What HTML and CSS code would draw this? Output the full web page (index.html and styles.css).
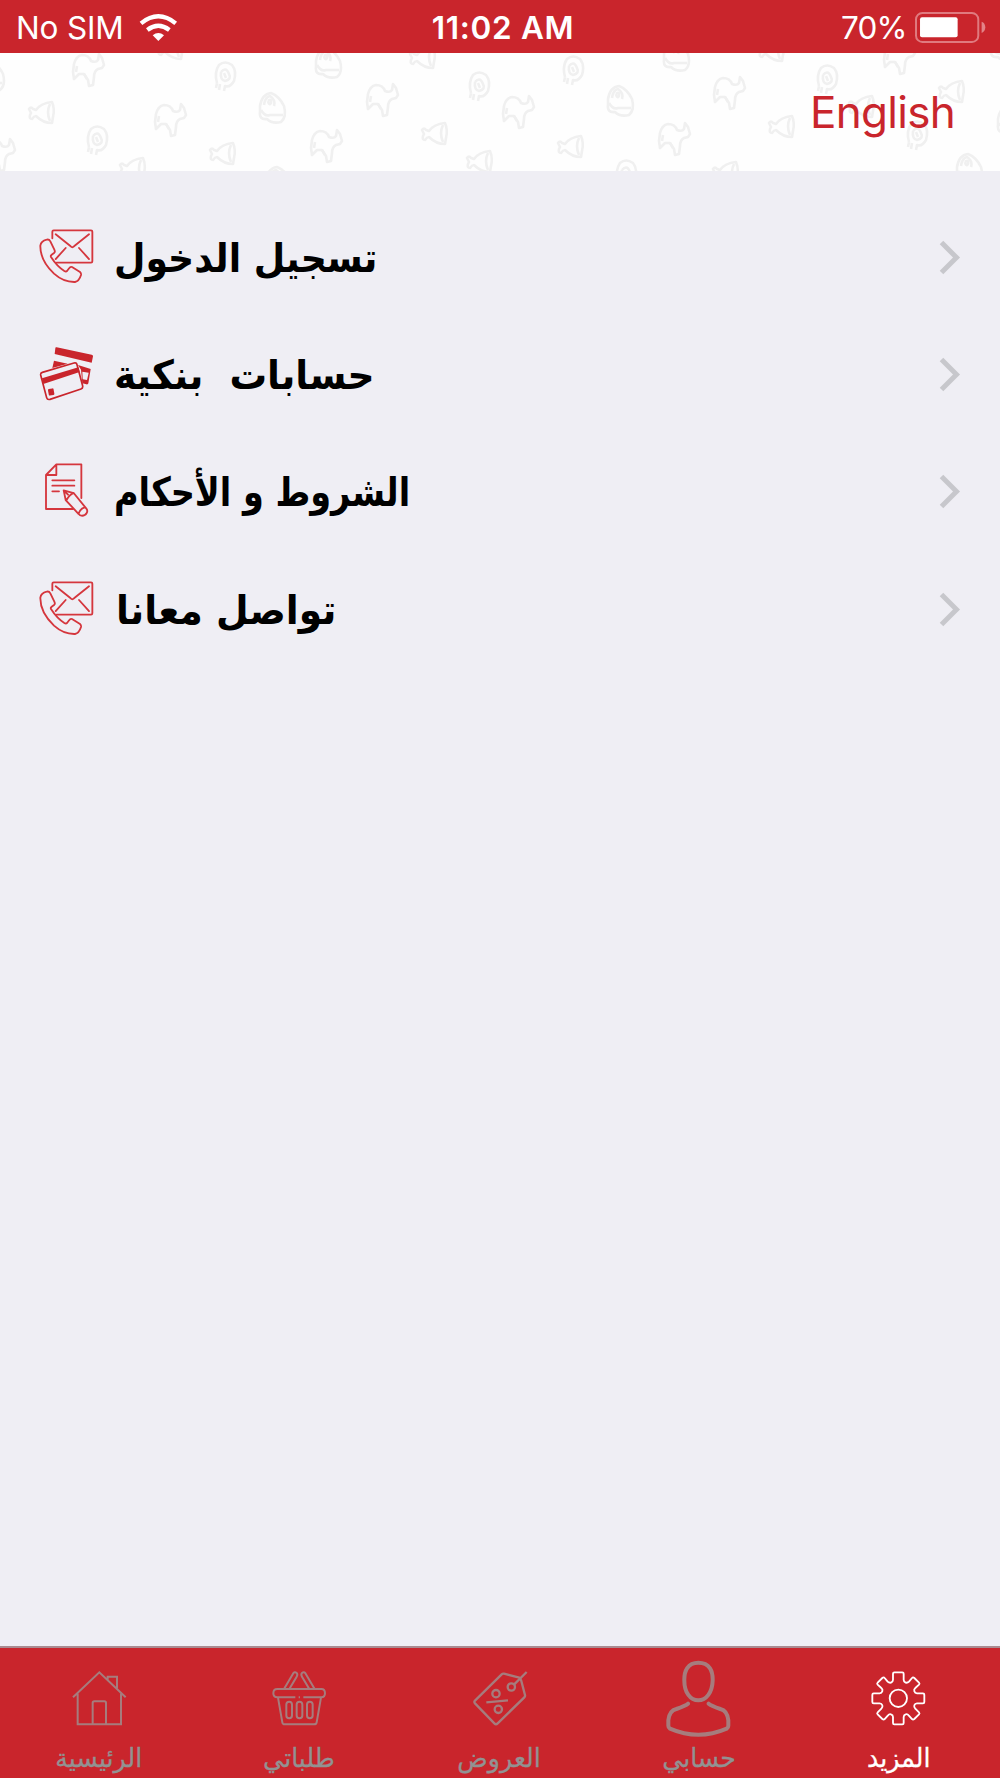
FILE: index.html
```html
<!DOCTYPE html>
<html lang="ar">
<head>
<meta charset="utf-8">
<title>المزيد</title>
<link rel="stylesheet" href="styles.css">
</head>
<body>
<div class="app">
  <div class="status">
    <div class="carrier"><span class="sim">No SIM</span>
      <svg class="wifi" viewBox="418 36 116 86"><g fill="none" stroke="#fff"><path d="M424 67Q476 25 528 67" stroke-width="13"/><path d="M443 87Q476 62 509 87" stroke-width="13"/></g><path fill="#fff" d="M459 103Q476 89 493 103L476 120Z"/></svg>
    </div>
    <span class="time">11:02 AM</span>
    <div class="power"><span class="pct">70%</span>
      <svg class="battery" viewBox="1244 36 214 94"><rect x="1247" y="39" width="187" height="87" rx="19" fill="none" stroke="#e07a7f" stroke-width="6"/><rect x="1259" y="52" width="113" height="60" rx="6" fill="#fff"/><path fill="#e38388" d="M1444 65q11 4 11 17t-11 17z"/></svg>
    </div>
  </div>

  <header class="header">
    <svg class="pattern" viewBox="0 53 1000 118" aria-hidden="true">
      <defs>
        <g id="goat"><path d="M2 12Q4 4 10 3Q17 3 19 9Q24 11 26 8L27 2L30 6L32 13L30 16L26 17Q22 19 22 25L21 33L17 34L16 28L12 22L7 22L4 25L2 27L1 20Z"/><path d="M5 14L4 20M12 22L15 27"/></g>
        <g id="leg"><path d="M8 9Q13 2 24 1Q27 8 25 16L24 22Q15 22 8 15Q6 15 4 18Q1 18 2 14L3 12L1 8Q3 5 5 8Z"/><path d="M22 3Q18 11 22 20"/></g>
        <g id="ham"><path d="M2 22Q-1 11 4 4Q10-1 17 4Q22 10 19 20Q15 27 10 25L9 30M2 22L1 27M5 23L4 29"/><path d="M6 11Q11 5 14 13Q17 18 10 20Q5 19 6 11M9 12L11 17"/></g>
        <g id="steak"><path d="M1 14Q3 2 12 1Q20 4 25 14Q28 25 22 30Q13 32 8 27Q0 28 1 20Z"/><path d="M2 18Q6 25 11 23L24 23M5 13Q6 5 11 4Q17 8 15 14M9 9Q13 6 12 11Q10 14 9 9"/></g>
      </defs>
      <g class="marks">
        <use href="#goat" x="72" y="52"/><use href="#goat" x="154" y="102"/><use href="#goat" x="366" y="82"/><use href="#goat" x="310" y="128"/><use href="#goat" x="-17" y="137"/><use href="#goat" x="502" y="94"/><use href="#goat" x="713" y="75"/><use href="#goat" x="658" y="121"/><use href="#goat" x="883" y="40"/>
        <use href="#leg" x="28" y="101"/><use href="#leg" x="119" y="157"/><use href="#leg" x="209" y="142"/><use href="#leg" x="409" y="46"/><use href="#leg" x="421" y="122"/><use href="#leg" x="466" y="150"/><use href="#leg" x="157" y="37"/><use href="#leg" x="557" y="135"/><use href="#leg" x="712" y="161"/><use href="#leg" x="768" y="115"/><use href="#leg" x="848" y="95"/><use href="#leg" x="938" y="80"/><use href="#leg" x="758" y="39"/>
        <use href="#ham" x="215" y="61"/><use href="#ham" x="87" y="125"/><use href="#ham" x="469" y="71"/><use href="#ham" x="563" y="55"/><use href="#ham" x="817" y="64"/><use href="#ham" x="907" y="120"/><use href="#ham" x="616" y="159"/>
        <use href="#steak" x="259" y="92"/><use href="#steak" x="315" y="47"/><use href="#steak" x="607" y="85"/><use href="#steak" x="663" y="40"/><use href="#steak" x="956" y="153"/><use href="#steak" x="-22" y="60"/><use href="#steak" x="990" y="30"/><use href="#steak" x="997" y="105"/><use href="#steak" x="265" y="166"/>
      </g>
    </svg>
    <span class="lang">English</span>
  </header>

  <main class="list">
    <div class="row">
      <svg class="icon" viewBox="58 56 164 164"><g id="contact" class="line"><path d="M98 84V64Q98 60 102 60H214Q218 60 218 64V153Q218 157 214 157H111M108 72L153 108Q158 113 163 108L208 72M108 146L138 113M178 113L208 146"/><path d="M81 88Q64 92 62 106Q61 150 103 190Q132 216 166 215Q178 213 184 194Q185 189 181 185L157 170Q152 168 149 173L142 182Q139 185 134 182Q112 168 94 140Q92 136 96 133L104 127Q107 124 104 118L92 93Q88 86 81 88Z"/></g></svg>
      <span class="label l1">تسجيل الدخول</span>
      <svg class="chev" viewBox="0 0 22 36"><path d="M2.500 2.500L17.500 17.500L2.500 32.500"/></svg>
    </div>
    <div class="row">
      <svg class="icon" viewBox="58 406 164 164"><g fill="#c9252c"><path d="M111 410Q107 408 107 413L105 430L216 456L220 437Q220 433 216 432Z"/><path d="M98 472L103 450L144 459Z"/><path d="M175 463L213 475L206 518Q205 522 200 521L188 518L184 477Z"/><path fill="#efeef4" d="M188 483L207 486L202 508L189 506Z"/></g><path d="M68 485L163 457Q170 455 172 462L189 526Q190 533 184 535L91 566Q83 568 81 561L63 493Q62 487 68 485Z" fill="#efeef4" stroke="#c9252c" stroke-width="5"/><path fill="#c9252c" d="M67 503L176 470L180 484L71 520Z"/><rect x="86" y="534" width="17" height="20" rx="3" fill="#c9252c" transform="rotate(-10 94 544)"/></svg>
      <span class="label l2">حسابات&nbsp; بنكية</span>
      <svg class="chev" viewBox="0 0 22 36"><path d="M2.500 2.500L17.500 17.500L2.500 32.500"/></svg>
    </div>
    <div class="row">
      <svg class="icon" viewBox="58 70 164 164"><g class="line"><path d="M185 175V74H110L79 106V208H160M110 74V106H79M98 122H164M98 138H164M98 155H118"/><path d="M132 152L162 160L200 207Q205 213 201 220Q196 229 185 228Q181 228 177 223L138 181ZM162 160Q151 163 141 180M195 203Q182 207 177 221M134 154L145 165"/></g></svg>
      <span class="label l3">الشروط و الأحكام</span>
      <svg class="chev" viewBox="0 0 22 36"><path d="M2.500 2.500L17.500 17.500L2.500 32.500"/></svg>
    </div>
    <div class="row">
      <svg class="icon" viewBox="58 56 164 164"><use href="#contact"/></svg>
      <span class="label l4">تواصل معانا</span>
      <svg class="chev" viewBox="0 0 22 36"><path d="M2.500 2.500L17.500 17.500L2.500 32.500"/></svg>
    </div>
  </main>

  <nav class="tabs">
    <div class="tab"><svg viewBox="197 86 200 240"><path d="M218 201L297 126L376 201M232 190V282H362V190M277 282V218Q277 213 282 213H312Q317 213 317 218V282M322 148V139H350V174"/></svg><span>الرئيسية</span></div>
    <div class="tab"><svg viewBox="796 86 200 240"><path d="M832 202L845 276Q846 282 852 282H940Q947 282 948 276L961 202M830 176H962Q973 176 973 189Q973 201 962 201H908M884 201H830Q818 201 818 189Q818 176 830 176M894 201H898M850 176L877 130Q882 123 888 128Q892 132 888 139L866 176M942 176L915 130Q910 123 904 128Q900 132 904 139L926 176"/><rect x="857" y="214" width="17" height="50" rx="8.500"/><rect x="888" y="214" width="17" height="50" rx="8.500"/><rect x="919" y="214" width="17" height="50" rx="8.500"/></svg><span>طلباتي</span></div>
    <div class="tab"><svg viewBox="377 86 200 240"><g stroke-width="7"><path d="M484 132Q487 129 491 130L537 142Q541 143 542 148L554 194Q555 198 552 201L472 279Q467 284 462 279L404 219Q400 215 404 211ZM521 163L559 125M438 216L503 210"/><circle cx="513" cy="170" r="11"/><circle cx="467" cy="190" r="11"/><circle cx="474" cy="237" r="11"/></g></svg><span>العروض</span></div>
    <div class="tab"><svg viewBox="47 86 200 240"><g stroke-width="12"><path d="M144 97C178 97 188 122 187 151C186 186 168 210 144 210C120 210 102 186 102 151C101 122 112 97 144 97ZM113 220Q106 226 78 236Q57 241 54 270V286Q54 292 59 295Q144 332 229 295Q234 292 234 286V270Q231 241 210 236Q182 226 175 220" stroke-linecap="round"/></g></svg><span>حسابي</span></div>
    <div class="tab active"><svg viewBox="649 86 200 240"><g stroke-width="5.500"><path d="M730 148V130Q730 126 734 126H758Q762 126 762 130V148Q762 154 768 157Q774 158 778 154L787 143Q790 139 794 143L808 157Q811 160 808 163L797 173Q792 177 794 183Q796 189 802 189H820Q824 189 824 193V215Q824 219 820 219H802Q796 219 794 225Q792 231 797 235L808 246Q811 249 808 252L794 266Q790 269 787 266L777 255Q773 250 768 252Q762 254 762 260V278Q762 282 758 282H734Q730 282 730 278V260Q730 254 724 252Q719 250 715 255L705 266Q702 269 698 266L684 252Q681 249 684 246L695 235Q700 231 698 225Q696 219 690 219H672Q668 219 668 215V193Q668 189 672 189H690Q696 189 698 183Q700 177 695 173L684 163Q681 160 684 157L698 143Q702 139 705 143L714 154Q718 158 724 157Q730 154 730 148Z"/><circle cx="746" cy="204" r="26"/></g></svg><span>المزيد</span></div>
  </nav>
</div>
</body>
</html>
```
FILE: styles.css
```css
* { box-sizing: border-box; }
body { margin: 0; font-family: Inter, "Liberation Sans", sans-serif; }
.app { width: 1000px; height: 1778px; display: flex; flex-direction: column; background: #efeef4; overflow: hidden; }
svg { display: block; flex: none; }

.status { height: 53px; background: #c9252c; color: #fff; display: grid; grid-template-columns: 1fr auto 1fr; align-items: center; font-size: 31.5px; line-height: 40px; padding: 3px 14px 0 16px; }
.carrier, .power { display: flex; align-items: center; }
.power { justify-content: flex-end; }
.sim { letter-spacing: -0.2px; }
.wifi { width: 38.7px; height: 28.7px; margin: -1px 0 0 16px; }
.time { font-weight: 600; letter-spacing: 0.7px; margin-left: 4px; }
.battery { width: 71.3px; height: 31.3px; margin-left: 8px; }
.pct { letter-spacing: -0.8px; }

.header { height: 118px; background: #fefefe; position: relative; display: flex; justify-content: flex-end; align-items: center; padding-right: 45px; }
.pattern { position: absolute; inset: 0; width: 1000px; height: 118px; }
.marks { fill: none; stroke: #f0f0f0; stroke-width: 2.6; stroke-linejoin: round; }
.lang { position: relative; color: #c9252c; font-size: 44px; line-height: 54px; letter-spacing: -0.7px; }

.list { flex: 1; padding-top: 28px; }
.row { height: 117.33px; display: flex; align-items: center; padding: 0 39px; }
.icon { width: 54.7px; height: 54.7px; margin-top: -3px; }
.line { fill: none; stroke: #d5363d; stroke-width: 5.5; stroke-linejoin: round; stroke-linecap: round; }
.label { direction: rtl; margin-left: 20px; font: bold 40px/60px "DejaVu Sans", sans-serif; color: #000; white-space: nowrap; transform-origin: left center; }
.l1 { transform: scaleX(0.905); }
.l2 { transform: scaleX(0.938); }
.l3 { transform: scaleX(0.838); }
.l4 { transform: scaleX(0.94); margin-left: 22px; }
.chev { width: 22px; height: 36px; margin-left: auto; fill: none; stroke: #c7c7cc; stroke-width: 5; }

.tabs { height: 132px; background: #c9252c; border-top: 2px solid #a98a90; display: grid; grid-template-columns: repeat(5, 200px); margin-left: -1px; }
.tab { display: flex; flex-direction: column; align-items: center; color: #929292; }
.tab svg { width: 66.67px; height: 80px; margin-top: 11px; fill: none; stroke: #a67c7d; stroke-width: 6; }
.tab span { font: 26px/34px "DejaVu Sans", sans-serif; direction: rtl; white-space: nowrap; margin-top: 2px; transform: scaleX(0.97); -webkit-text-stroke: 0.3px; }
.tab.active { color: #fff; }
.tab.active svg { stroke: #fff; }
```
